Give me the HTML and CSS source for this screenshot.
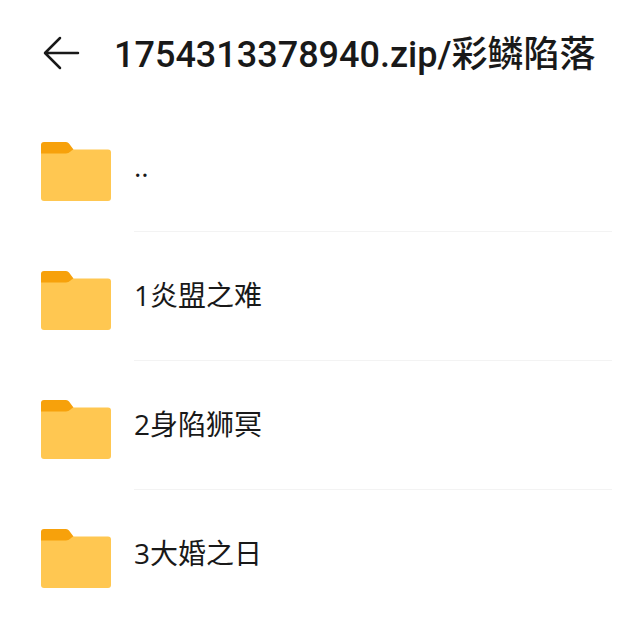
FILE: index.html
```html
<!DOCTYPE html>
<html lang="zh-CN">
<head>
<meta charset="utf-8">
<meta name="viewport" content="width=device-width, initial-scale=1">
<title>1754313378940.zip/彩鳞陷落</title>
<link rel="stylesheet" href="styles.css">
</head>
<body>
<svg class="defs" aria-hidden="true">
  <symbol id="folder" viewBox="0 0 72 60">
    <path class="base" d="M1 8.500H68Q71 8.500 71 11.500V57Q71 60 68 60H4Q1 60 1 57Z"/>
    <path class="tab" d="M1 12.500V4Q1 1 4 1H26Q28 1 29 2.500L33.500 8.500Q32 9 30.500 10.500Q28.500 12.500 26 12.500Z"/>
  </symbol>
</svg>
<header class="bar">
  <button class="back" type="button" aria-label="返回">
    <svg class="arrow" viewBox="0 0 36 34" aria-hidden="true"><path d="M34 17H1.500M16 2L1 17L16 32"/></svg>
  </button>
  <h1 class="title">1754313378940.zip/彩鳞陷落</h1>
</header>
<main>
  <ul class="list">
    <li><a class="row" href="#"><svg class="folder" aria-hidden="true"><use href="#folder"/></svg><span class="name">..</span></a></li>
    <li><a class="row" href="#"><svg class="folder" aria-hidden="true"><use href="#folder"/></svg><span class="name">1炎盟之难</span></a></li>
    <li><a class="row" href="#"><svg class="folder" aria-hidden="true"><use href="#folder"/></svg><span class="name">2身陷狮冥</span></a></li>
    <li><a class="row" href="#"><svg class="folder" aria-hidden="true"><use href="#folder"/></svg><span class="name">3大婚之日</span></a></li>
  </ul>
</main>
</body>
</html>
```
FILE: styles.css
```css
* { box-sizing: border-box; }
body {
  margin: 0;
  background: #fff;
  color: #191919;
  font-family: "Open Sans", "Noto Sans CJK SC", sans-serif;
}
.defs { position: absolute; width: 0; height: 0; }
.bar { display: flex; align-items: center; gap: 34px; height: 103px; padding: 2px 28px 0 44px; }
.back { display: flex; padding: 0; border: 0; background: none; cursor: pointer; }
.arrow { width: 36px; height: 34px; overflow: visible; fill: none; stroke: #191919; stroke-width: 2.5; stroke-linecap: round; stroke-linejoin: round; }
.title { margin: 0; padding-top: 4px; font-family: Roboto, "Noto Sans CJK SC", sans-serif; font-size: 36px; line-height: 48px; font-weight: 500; white-space: nowrap; }
.list { list-style: none; margin: 0; padding: 0; }
.row { display: flex; align-items: center; gap: 22px; padding: 7px 28px 0 40px; color: inherit; text-decoration: none; }
.folder { flex: none; width: 72px; height: 60px; }
.tab { fill: #f7a10b; }
.base { fill: #ffc751; }
.name { flex: 1; padding-bottom: 8px; border-bottom: 1px solid #f3f3f3; font-size: 28px; line-height: 113px; white-space: nowrap; }
li:last-child .name { border-bottom-color: transparent; }
```
